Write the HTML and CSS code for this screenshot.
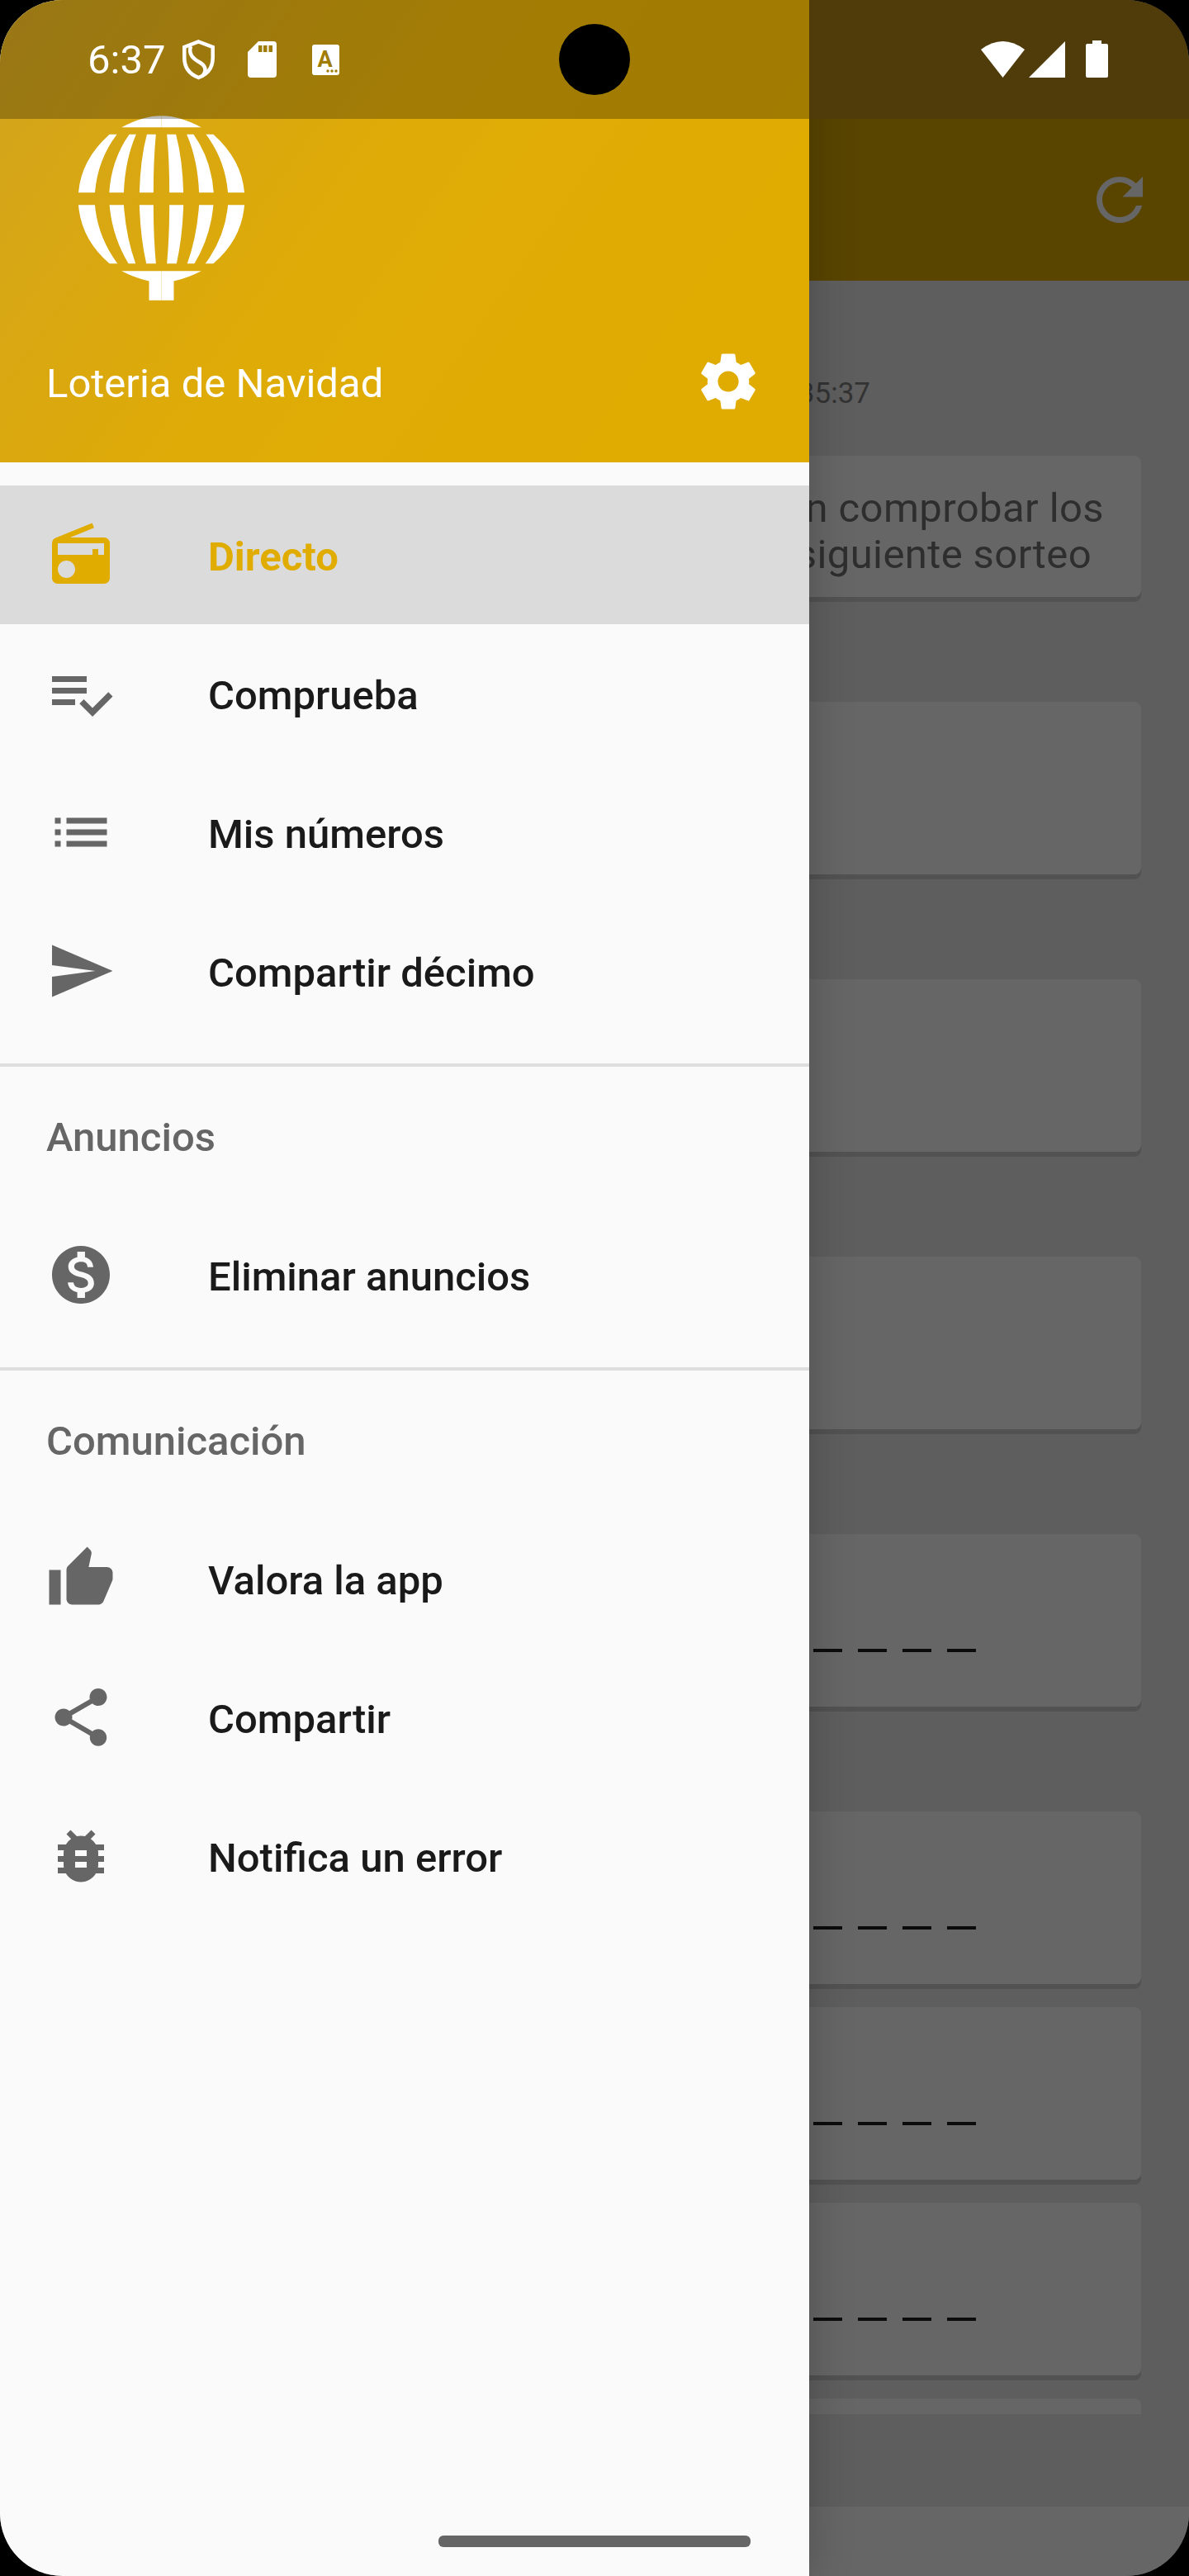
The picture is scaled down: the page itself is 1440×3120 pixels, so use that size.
FILE: index.html
```html
<!DOCTYPE html>
<html lang="es">
<head>
    <meta charset="UTF-8">
    <title>Loteria de Navidad</title>
    <link rel="stylesheet" href="styles.css">
</head>
<body>
<div class="screen">

    <!-- app behind the drawer -->
    <div class="app">
        <div class="toolbar">
            <svg class="icon" viewBox="0 0 24 24"><path d="M17.65 6.35C16.2 4.9 14.21 4 12 4c-4.42 0-7.99 3.58-7.99 8s3.57 8 7.99 8c3.73 0 6.84-2.55 7.73-6h-2.08c-.82 2.33-3.04 4-5.65 4-3.31 0-6-2.69-6-6s2.69-6 6-6c1.66 0 3.14.69 4.22 1.78L13 11h7V4l-2.35 2.35z"/></svg>
        </div>
        <div class="content">
            <div class="updated">Actualizado a las 20:35:37</div>
            <div class="card notice">
                <span class="line-one">Aquí se podrán comprobar los</span>
                <span class="line-two">números del siguiente sorteo</span>
            </div>
            <div class="card spaced"></div>
            <div class="card spaced"></div>
            <div class="card spaced"></div>
            <div class="card spaced"><div class="dashes"><i></i><i></i><i></i><i></i><i></i></div></div>
            <div class="card spaced"><div class="dashes"><i></i><i></i><i></i><i></i><i></i></div></div>
            <div class="card"><div class="dashes"><i></i><i></i><i></i><i></i><i></i></div></div>
            <div class="card"><div class="dashes"><i></i><i></i><i></i><i></i><i></i></div></div>
            <div class="card"></div>
        </div>
        <div class="nav-bar"></div>
    </div>

    <!-- navigation drawer -->
    <div class="drawer">
        <div class="drawer-header">
            <svg class="logo" viewBox="90 30 640 672">
                <defs>
                    <g id="half">
                        <path d="M262 72Q340 30 407 30V72Z"/>
                        <path d="M218 98H245Q175 190 165 310H105Q115 190 218 98Z"/>
                        <path d="M290 98H315Q275 190 270 310H217Q225 190 290 98Z"/>
                        <path d="M354 98H387Q378 190 378 310H327Q330 190 354 98Z"/>
                        <path d="M105 355H165Q175 470 247 568H218Q115 480 105 355Z"/>
                        <path d="M218 355H270Q278 470 313 568H287Q228 470 218 355Z"/>
                        <path d="M327 355H378Q378 470 387 568H352Q330 470 327 355Z"/>
                        <path d="M262 595H407V702H362V632Q310 620 262 595Z"/>
                    </g>
                </defs>
                <use href="#half"/>
                <use href="#half" transform="translate(814 0) scale(-1 1)"/>
            </svg>
            <div class="header-row">
                <span class="app-title">Loteria de Navidad</span>
                <svg class="icon" viewBox="0 0 24 24"><path d="M19.14 12.94c.04-.3.06-.61.06-.94 0-.32-.02-.64-.07-.94l2.03-1.58c.18-.14.23-.41.12-.61l-1.92-3.32c-.12-.22-.37-.29-.59-.22l-2.39.96c-.5-.38-1.03-.7-1.62-.94l-.36-2.54c-.04-.24-.24-.41-.48-.41h-3.84c-.24 0-.43.17-.47.41l-.36 2.54c-.59.24-1.13.57-1.62.94l-2.39-.96c-.22-.08-.47 0-.59.22L2.74 8.87c-.12.21-.08.47.12.61l2.03 1.58c-.05.3-.09.63-.09.94s.02.64.07.94l-2.03 1.58c-.18.14-.23.41-.12.61l1.92 3.32c.12.22.37.29.59.22l2.39-.96c.5.38 1.03.7 1.62.94l.36 2.54c.05.24.24.41.48.41h3.84c.24 0 .44-.17.47-.41l.36-2.54c.59-.24 1.13-.56 1.62-.94l2.39.96c.22.08.47 0 .59-.22l1.92-3.32c.12-.22.07-.47-.12-.61l-2.01-1.58zM12 15.6c-1.98 0-3.6-1.62-3.6-3.6s1.62-3.6 3.6-3.6 3.6 1.62 3.6 3.6-1.62 3.6-3.6 3.6z"/></svg>
            </div>
        </div>

        <div class="menu-group first">
            <div class="menu-item selected">
                <svg class="icon" viewBox="0 0 24 24"><path d="M3.24 6.15C2.51 6.43 2 7.17 2 8v12c0 1.1.89 2 2 2h16c1.11 0 2-.9 2-2V8c0-1.11-.89-2-2-2H8.3l8.26-3.34L15.88 1 3.24 6.15zM7 20c-1.66 0-3-1.34-3-3s1.34-3 3-3 3 1.34 3 3-1.34 3-3 3zm13-8h-2v-2h-2v2H4V8h16v4z"/></svg>
                <span>Directo</span>
            </div>
            <div class="menu-item">
                <svg class="icon" viewBox="0 0 24 24"><path d="M14 10H2v2h12v-2zm0-4H2v2h12V6zM2 16h8v-2H2v2zm19.5-4.5L23 13l-6.99 7-4.51-4.5L13 14l3.01 3 5.49-5.5z"/></svg>
                <span>Comprueba</span>
            </div>
            <div class="menu-item">
                <svg class="icon" viewBox="0 0 24 24"><path d="M3 13h2v-2H3v2zm0 4h2v-2H3v2zm0-8h2V7H3v2zm4 4h14v-2H7v2zm0 4h14v-2H7v2zM7 7v2h14V7H7z"/></svg>
                <span>Mis números</span>
            </div>
            <div class="menu-item">
                <svg class="icon" viewBox="0 0 24 24"><path d="M2.01 21L23 12 2.01 3 2 10l15 2-15 2z"/></svg>
                <span>Compartir décimo</span>
            </div>
        </div>

        <div class="menu-group">
            <div class="group-title">Anuncios</div>
            <div class="menu-item">
                <svg class="icon" viewBox="0 0 24 24"><path d="M12 2C6.48 2 2 6.48 2 12s4.48 10 10 10 10-4.48 10-10S17.52 2 12 2zm1.41 16.09V20h-2.67v-1.93c-1.71-.36-3.16-1.46-3.27-3.4h1.96c.1 1.05.82 1.87 2.65 1.87 1.96 0 2.4-.98 2.4-1.59 0-.83-.44-1.61-2.67-2.14-2.48-.6-4.18-1.62-4.18-3.67 0-1.72 1.39-2.84 3.11-3.21V4h2.67v1.95c1.86.45 2.79 1.86 2.85 3.39H14.3c-.05-1.11-.64-1.87-2.22-1.87-1.5 0-2.4.68-2.4 1.64 0 .84.65 1.39 2.67 1.91s4.18 1.39 4.18 3.91c-.01 1.83-1.38 2.83-3.12 3.16z"/></svg>
                <span>Eliminar anuncios</span>
            </div>
        </div>

        <div class="menu-group last">
            <div class="group-title">Comunicación</div>
            <div class="menu-item">
                <svg class="icon" viewBox="0 0 24 24"><path d="M1 21h4V9H1v12zm22-11c0-1.1-.9-2-2-2h-6.31l.95-4.57.03-.32c0-.41-.17-.79-.44-1.06L14.17 1 7.59 7.59C7.22 7.95 7 8.45 7 9v10c0 1.1.9 2 2 2h9c.83 0 1.54-.5 1.84-1.22l3.02-7.05c.09-.23.14-.47.14-.73v-2z"/></svg>
                <span>Valora la app</span>
            </div>
            <div class="menu-item">
                <svg class="icon" viewBox="0 0 24 24"><path d="M18 16.08c-.76 0-1.44.3-1.96.77L8.91 12.7c.05-.23.09-.46.09-.7s-.04-.47-.09-.7l7.05-4.11c.54.5 1.25.81 2.04.81 1.66 0 3-1.34 3-3s-1.34-3-3-3-3 1.34-3 3c0 .24.04.47.09.7L8.04 9.81C7.5 9.31 6.79 9 6 9c-1.66 0-3 1.34-3 3s1.34 3 3 3c.79 0 1.5-.31 2.04-.81l7.12 4.16c-.05.21-.08.43-.08.65 0 1.61 1.31 2.92 2.92 2.92 1.61 0 2.92-1.31 2.92-2.92s-1.31-2.92-2.92-2.92z"/></svg>
                <span>Compartir</span>
            </div>
            <div class="menu-item">
                <svg class="icon" viewBox="0 0 24 24"><path d="M20 8h-2.81c-.45-.78-1.07-1.45-1.82-1.96L17 4.41 15.59 3l-2.17 2.17C12.96 5.06 12.49 5 12 5c-.49 0-.96.06-1.41.17L8.41 3 7 4.41l1.62 1.63C7.88 6.55 7.26 7.22 6.81 8H4v2h2.09c-.05.33-.09.66-.09 1v1H4v2h2v1c0 .34.04.67.09 1H4v2h2.81c1.04 1.79 2.97 3 5.19 3s4.15-1.21 5.19-3H20v-2h-2.09c.05-.33.09-.66.09-1v-1h2v-2h-2v-1c0-.34-.04-.67-.09-1H20V8zm-6 8h-4v-2h4v2zm0-4h-4v-2h4v2z"/></svg>
                <span>Notifica un error</span>
            </div>
        </div>
    </div>

    <!-- status bar lies over both the app and the drawer -->
    <div class="status-bar">
        <div class="status-left">
            <span class="clock">6:37</span>
            <svg class="st-shield" viewBox="0 0 40 50" fill="none" stroke="#fff" stroke-width="4.5"><path d="M20.5 3.5L37.7 10V23C37.7 35 31 43 20.5 47C10 43 3.3 35 3.3 23V10Z"/><path d="M11 9C8 19 14 24 21 28C28 32 31 37 26 44"/></svg>
            <svg class="st-sd" viewBox="0 0 35 44"><path d="M13 0H31Q35 0 35 4V40Q35 44 31 44H4Q0 44 0 40V13Z" fill="#fff"/><path d="M13 5h4.5v8H13zM19 5h4.5v8H19zM25.5 5H30v8h-4.5z" fill="#a07c04"/></svg>
            <svg class="st-a" viewBox="0 0 33 37"><rect width="33" height="37" rx="3" fill="#fff"/><text x="15.5" y="27" text-anchor="middle" class="st-a-letter">A</text><circle cx="19" cy="32" r="1.7" fill="#a07c04"/><circle cx="24" cy="32" r="1.7" fill="#a07c04"/><circle cx="29" cy="32" r="1.7" fill="#a07c04"/></svg>
        </div>
        <div class="status-right">
            <svg class="st-wifi" viewBox="0 0 53 44"><path d="M0 10Q26.5-10 53 10L26.5 44Z" fill="#fff"/></svg>
            <svg class="st-signal" viewBox="0 0 44 44"><path d="M44 0V44H0Z" fill="#fff"/></svg>
            <svg class="st-battery" viewBox="0 0 27 45"><path d="M8 0H19V4H25Q27 4 27 6V43Q27 45 25 45H2Q0 45 0 43V6Q0 4 2 4H8Z" fill="#fff"/></svg>
        </div>
    </div>

    <div class="camera"></div>
    <div class="home-bar"></div>
</div>
</body>
</html>
```

FILE: styles.css
```css
/* Base page */
body {
    margin: 0;
    background-color: #000;
    font-family: Roboto, "Noto Sans", sans-serif;
}

.screen {
    position: relative;
    width: 1440px;
    height: 3120px;
    overflow: hidden;
    border-radius: 76px;
}

.icon {
    display: block;
    width: 84px;
    height: 84px;
    flex-shrink: 0;
    fill: #666;
}

/* App behind the drawer, already dimmed */
.app {
    display: flex;
    flex-direction: column;
    height: 100%;
    padding-top: 144px;
    box-sizing: border-box;
    background-color: #5e5e5e;
}

.toolbar {
    display: flex;
    justify-content: flex-end;
    align-items: center;
    height: 196px;
    padding-right: 42px;
    background-color: #594500;
}

.content {
    height: 2584px;
    padding: 115px 58px 0;
    box-sizing: border-box;
    overflow: hidden;
}

.updated {
    margin-right: 328px;
    font-size: 35px;
    line-height: 44px;
    text-align: right;
    color: #333;
}

.card {
    height: 209px;
    margin-top: 28px;
    border-radius: 8px;
    background-color: #666;
    box-shadow: 0 6px 0 #525252;
}

.card.spaced {
    margin-top: 127px;
}

.notice {
    height: 171px;
    margin-top: 53px;
    padding-top: 36px;
    box-sizing: border-box;
    font-size: 49px;
    line-height: 56px;
    letter-spacing: 0.4px;
    color: #2e2e2e;
    white-space: nowrap;
}

.notice span {
    display: block;
    text-align: right;
}

.line-one {
    margin-right: 45px;
}

.line-two {
    margin-right: 60px;
}

.dashes {
    display: flex;
    gap: 19px;
    padding: 139px 0 0 873px;
}

.dashes i {
    width: 35px;
    height: 4px;
    background-color: #0c0c0c;
}

.nav-bar {
    flex-grow: 1;
    margin-top: 112px;
    background-color: #666;
}

/* Drawer */
.drawer {
    position: absolute;
    top: 0;
    left: 0;
    bottom: 0;
    width: 980px;
    background-color: #fafafa;
    box-shadow: 0 0 50px rgba(0, 0, 0, 0.22);
}

.drawer-header {
    height: 560px;
    padding-top: 140px;
    box-sizing: border-box;
    background: linear-gradient(125deg, #d2a41e 0%, #dfab06 45%, #e0ac00 100%);
}

.logo {
    display: block;
    width: 213px;
    height: 224px;
    margin: 0 0 0 90px;
}

.logo use {
    fill: #fff;
}

.header-row {
    display: flex;
    justify-content: space-between;
    align-items: center;
    height: 84px;
    margin-top: 56px;
    padding: 0 56px;
}

.header-row .icon {
    fill: #fff;
}

.app-title {
    padding-top: 4px;
    font-size: 49px;
    color: #fff;
}

.menu-group {
    padding-bottom: 28px;
    border-bottom: 4px solid #dedede;
}

.menu-group.first {
    padding-top: 28px;
}

.menu-group.last {
    border-bottom: none;
}

.group-title {
    height: 168px;
    padding-left: 56px;
    font-size: 49px;
    font-weight: 500;
    line-height: 172px;
    color: #666;
}

.menu-item {
    display: flex;
    align-items: center;
    gap: 112px;
    height: 168px;
    padding-left: 56px;
    font-size: 49px;
    font-weight: 500;
    color: #1a1a1a;
}

.menu-item span {
    padding-top: 4px;
}

.menu-item.selected {
    background-color: #dbdbdb;
    font-weight: 700;
    color: #e0ac00;
}

.menu-item.selected .icon {
    fill: #e0ac00;
}

/* Status bar */
.status-bar {
    position: absolute;
    top: 0;
    left: 0;
    right: 0;
    display: flex;
    height: 144px;
}

.status-left {
    display: flex;
    align-items: center;
    width: 980px;
    padding-left: 106px;
    box-sizing: border-box;
    background-color: rgba(0, 0, 0, 0.27);
}

.status-right {
    position: relative;
    flex-grow: 1;
    background-color: #4f3c0a;
}

.clock {
    width: 92px;
    font-size: 49px;
    color: #fff;
}

.st-shield {
    width: 40px;
    height: 50px;
    margin-left: 22px;
}

.st-sd {
    width: 35px;
    height: 44px;
    margin-left: 40px;
}

.st-a {
    width: 33px;
    height: 37px;
    margin-left: 43px;
}

.st-a-letter {
    font-family: Roboto, sans-serif;
    font-size: 27px;
    font-weight: 700;
    fill: #a07c04;
}

.st-wifi {
    position: absolute;
    top: 50px;
    left: 208px;
    width: 53px;
    height: 44px;
}

.st-signal {
    position: absolute;
    top: 50px;
    left: 266px;
    width: 44px;
    height: 44px;
}

.st-battery {
    position: absolute;
    top: 49px;
    left: 335px;
    width: 27px;
    height: 45px;
}

.camera {
    position: absolute;
    top: 29px;
    left: 677px;
    width: 86px;
    height: 86px;
    border-radius: 50%;
    background-color: #000;
}

.home-bar {
    position: absolute;
    left: 531px;
    bottom: 35px;
    width: 378px;
    height: 14px;
    border-radius: 6px;
    background-color: #666;
}
```
